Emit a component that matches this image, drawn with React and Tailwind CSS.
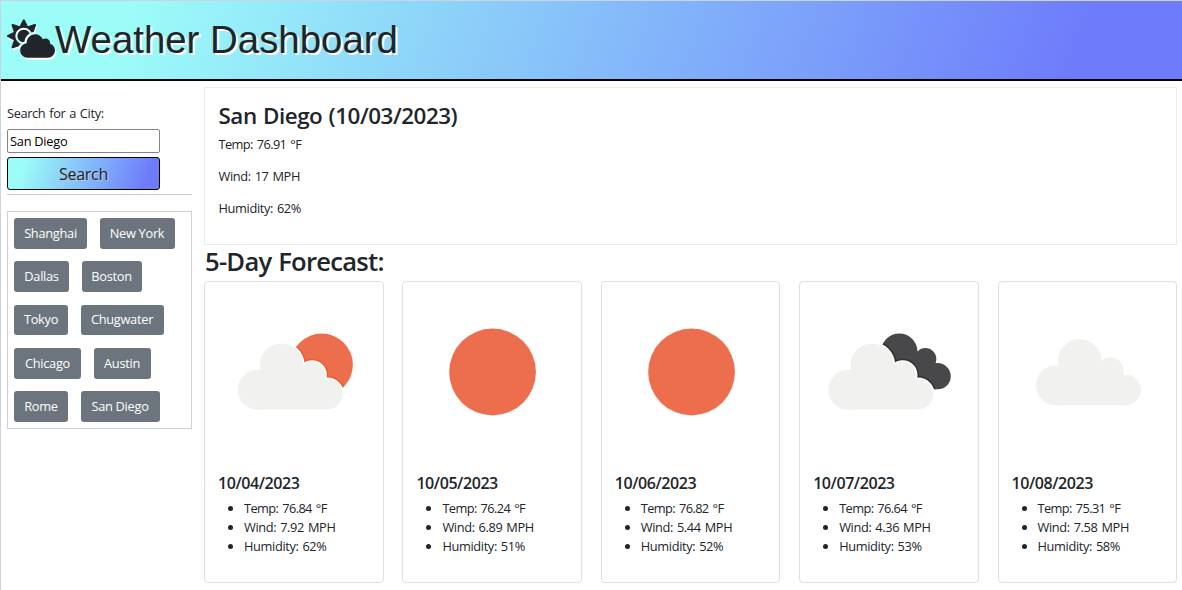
import React from "react";
import { FaCloudSun } from "react-icons/fa";

const cities = [
  ["Shanghai", "w-[73px]", "New York", "w-[75px]"],
  ["Dallas", "w-[55px]", "Boston", "w-[60px]"],
  ["Tokyo", "w-[54px]", "Chugwater", "w-[83px]"],
  ["Chicago", "w-[67px]", "Austin", "w-[57px]"],
  ["Rome", "w-[54px]", "San Diego", "w-[79px]"],
];

const days = [
  { date: "10/04/2023", icon: "few", temp: "76.84", wind: "7.92", hum: "62" },
  { date: "10/05/2023", icon: "sun", temp: "76.24", wind: "6.89", hum: "51" },
  { date: "10/06/2023", icon: "sun", temp: "76.82", wind: "5.44", hum: "52" },
  { date: "10/07/2023", icon: "broken", temp: "76.64", wind: "4.36", hum: "53" },
  { date: "10/08/2023", icon: "cloud", temp: "75.31", wind: "7.58", hum: "58" },
];

function Cloud(props) {
  return (
    <g {...props}>
      <circle cx="57" cy="102.8" r="20" />
      <circle cx="81" cy="78" r="21.7" />
      <circle cx="111.7" cy="88" r="13.3" />
      <circle cx="127" cy="107.4" r="15.3" />
      <path d="M57 122.7V100L62 80H98L112 84L127 94V122.7Z" />
    </g>
  );
}

function CutCloud({ x, y, shade }) {
  const move = `translate(${x} ${y})`;
  return (
    <>
      <g clipPath={`url(#clip-${shade.slice(1)})`}>
        <Cloud transform={move} fill={shade} stroke={shade} strokeWidth="6" opacity="0.6" />
      </g>
      <Cloud transform={move} fill="#fff" stroke="#fff" strokeWidth="3" />
      <Cloud transform={move} fill="#f1f1ef" />
    </>
  );
}

function WeatherIcon({ type }) {
  return (
    <svg viewBox="0 0 178 178" className="block w-full h-[178px]">
      {type === "sun" && <circle cx="89.8" cy="90" r="43.5" fill="#ec6e4c" />}
      {type === "cloud" && <Cloud fill="#f1f1ef" transform="translate(0 0.6)" />}
      {type === "few" && (
        <>
          <clipPath id="clip-ea5027">
            <circle cx="117" cy="82.7" r="31.3" />
          </clipPath>
          <circle cx="117" cy="82.7" r="31.3" fill="#ec6e4c" />
          <CutCloud x={-4.3} y={5} shade="#ea5027" />
        </>
      )}
      {type === "broken" && (
        <>
          <clipPath id="clip-222224">
            <circle cx="99.6" cy="69.5" r="18.2" />
            <circle cx="125.7" cy="77" r="11" />
            <circle cx="138" cy="94.2" r="13.2" />
            <path d="M90 72H116L126 70L138 84V107.4H100Z" />
          </clipPath>
          <rect width="178" height="178" fill="#48484a" clipPath="url(#clip-222224)" />
          <CutCloud x={-8.7} y={5} shade="#222224" />
        </>
      )}
    </svg>
  );
}

export default function App() {
  return (
    <div className="h-[590px] w-full overflow-hidden border-l border-t border-[#cbd3de] bg-white font-['Open_Sans','Noto_Sans',sans-serif] text-[12.8px] leading-[19.2px] tracking-[-0.36px] text-[#212529] [word-spacing:0.9px]">
      <header className="flex h-[80px] items-start border-b-2 border-black bg-[linear-gradient(109.6deg,rgb(156,252,248)_11.2%,rgb(110,123,251)_91.1%)] pl-[6px]">
        <FaCloudSun className="mt-[18px] h-[39px] w-[48px] [filter:drop-shadow(1px_2px_0_#fff)]" />
        <h1 className="mt-[16px] font-['Liberation_Sans',Arial,sans-serif] text-[38.4px] leading-[46px] tracking-normal [text-shadow:2px_2px_#fff] [word-spacing:0]">
          Weather Dashboard
        </h1>
      </header>

      <div className="flex">
        <aside className="w-[203px] shrink-0 pl-[6px] pr-[12px] pt-[23px]">
          <label htmlFor="city" className="block">Search for a City:</label>
          <input
            id="city"
            defaultValue="San Diego"
            className="mt-[6px] block h-[24px] w-[153px] rounded-[2px] border border-[#858585] bg-white px-[2px] tracking-[-0.25px] text-black outline-none"
          />
          <button className="mt-1 block h-[33px] w-[153px] rounded-[3px] border border-black bg-[linear-gradient(109.6deg,rgb(156,252,248)_11.2%,rgb(110,123,251)_91.1%)] text-[16px] leading-6 tracking-[-0.28px] [text-shadow:1px_1px_#b8c4d8]">
            Search
          </button>
          <hr className="mt-1 border-[#c8c9ca]" />
          <div className="mt-4 flex h-[218px] flex-col gap-[12.4px] border border-[#cfd0d2] pl-[6px] pt-[6px]">
            {cities.map(([a, wa, b, wb]) => (
              <div key={a} className="flex gap-[12.5px]">
                <button className={`${wa} h-[30.8px] shrink-0 rounded-[3px] bg-[#6c757d] text-center tracking-[-0.28px] text-white`}>{a}</button>
                <button className={`${wb} h-[30.8px] shrink-0 rounded-[3px] bg-[#6c757d] text-center tracking-[-0.28px] text-white`}>{b}</button>
              </div>
            ))}
          </div>
        </aside>

        <main className="min-w-0 flex-1 pr-[5px] pt-[6px]">
          <section className="h-[158px] border border-[#e9ebee] px-[13.5px] pt-[14px]">
            <h2 className="text-[22.4px] font-semibold leading-[27px] tracking-[-0.45px]">San Diego (10/03/2023)</h2>
            <p className="mt-[6px] tracking-[-0.6px] [word-spacing:1.2px]">Temp: 76.91 °F</p>
            <p className="mt-[12.8px]">Wind: 17 MPH</p>
            <p className="mt-[12.8px]">Humidity: 62%</p>
          </section>
          <h2 className="h-[36px] pl-px pt-px text-[25.6px] font-semibold leading-[31px] tracking-[-0.75px]">5-Day Forecast:</h2>
          <div className="flex justify-between">
            {days.map((d) => (
              <article key={d.date} className="h-[302px] w-[179.5px] rounded-[4px] border border-[#dfdfdf]">
                <WeatherIcon type={d.icon} />
                <div className="px-[13px] pt-[13px]">
                  <h5 className="text-[16px] font-semibold leading-[20px] tracking-[-0.42px]">{d.date}</h5>
                  <ul className="mt-[6px] list-disc pl-[26px]">
                    <li className="tracking-[-0.6px] [word-spacing:1.2px]">Temp: {d.temp} °F</li>
                    <li>Wind: {d.wind} MPH</li>
                    <li>Humidity: {d.hum}%</li>
                  </ul>
                </div>
              </article>
            ))}
          </div>
        </main>
      </div>
    </div>
  );
}
